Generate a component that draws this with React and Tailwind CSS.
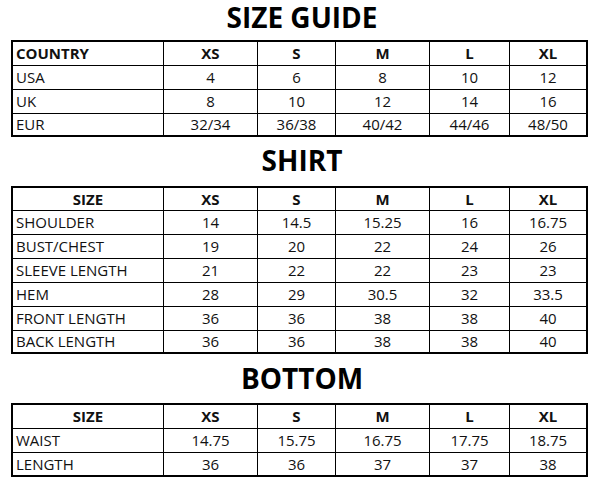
const SIZES = ['XS', 'S', 'M', 'L', 'XL'];

const GUIDE = [
  ['USA', '4', '6', '8', '10', '12'],
  ['UK', '8', '10', '12', '14', '16'],
  ['EUR', '32/34', '36/38', '40/42', '44/46', '48/50'],
];

const SHIRT = [
  ['SHOULDER', '14', '14.5', '15.25', '16', '16.75'],
  ['BUST/CHEST', '19', '20', '22', '24', '26'],
  ['SLEEVE LENGTH', '21', '22', '22', '23', '23'],
  ['HEM', '28', '29', '30.5', '32', '33.5'],
  ['FRONT LENGTH', '36', '36', '38', '38', '40'],
  ['BACK LENGTH', '36', '36', '38', '38', '40'],
];

const BOTTOM = [
  ['WAIST', '14.75', '15.75', '16.75', '17.75', '18.75'],
  ['LENGTH', '36', '36', '37', '37', '38'],
];

const GRID = 'grid grid-cols-[150px_94px_78px_94px_80px_77px]';

function Title({ children }) {
  return (
    <div className="text-center text-[28px] leading-[1.2] font-bold text-black">
      {children}
    </div>
  );
}

function SizeTable({ first, firstLeft, rows, headH, lastH }) {
  return (
    <div className="mx-[11px] w-[577px] border-2 border-black text-[15px] leading-tight text-[#111]">
      <div className={`${GRID} font-bold ${headH}`}>
        <div className={`flex items-center ${firstLeft ? 'pl-[3px]' : 'justify-center'}`}>{first}</div>
        {SIZES.map(s => (
          <div key={s} className="flex items-center justify-center border-l border-black">{s}</div>
        ))}
      </div>
      {rows.map((r, i) => (
        <div
          key={r[0]}
          className={`${GRID} border-t border-black ${i === rows.length - 1 ? lastH : 'h-[24px]'}`}
        >
          <div className="flex items-center pl-[3px]">{r[0]}</div>
          {r.slice(1).map((v, j) => (
            <div key={j} className="flex items-center justify-center border-l border-black">{v}</div>
          ))}
        </div>
      ))}
    </div>
  );
}

export default function App() {
  return (
    <div className="w-[604px] h-[493px] bg-white overflow-hidden" style={{ fontFamily: '"Open Sans", sans-serif' }}>
      <div className="h-[40px] pt-[1px]">
        <Title>SIZE GUIDE</Title>
      </div>
      <SizeTable first="COUNTRY" firstLeft rows={GUIDE} headH="h-[23px]" lastH="h-[22px]" />
      <div className="h-[49px] pt-[7px]">
        <Title>SHIRT</Title>
      </div>
      <SizeTable first="SIZE" rows={SHIRT} headH="h-[22px]" lastH="h-[22px]" />
      <div className="h-[49px] pt-[8px]">
        <Title>BOTTOM</Title>
      </div>
      <SizeTable first="SIZE" rows={BOTTOM} headH="h-[23px]" lastH="h-[23px]" />
    </div>
  );
}
